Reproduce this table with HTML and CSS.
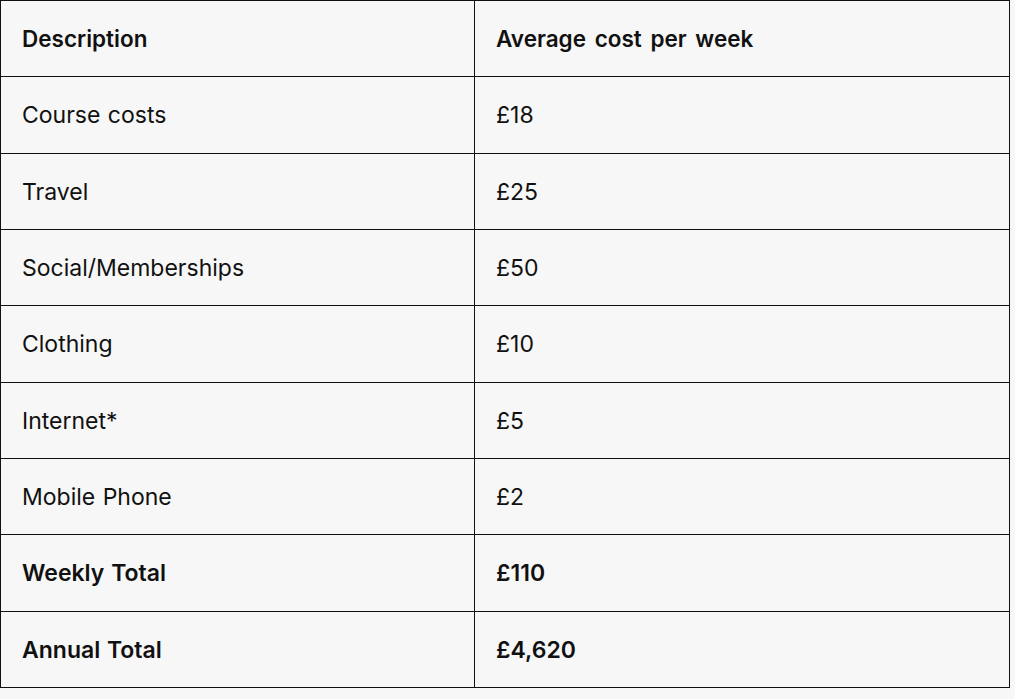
FILE: index.html
```html
<!DOCTYPE html>
<html lang="en">
<head>
<meta charset="utf-8">
<title>Costs</title>
<link rel="stylesheet" href="styles.css">
</head>
<body>
<table class="costs">
  <thead>
    <tr><th class="col-desc">Description</th><th>Average cost per week</th></tr>
  </thead>
  <tbody>
    <tr><td>Course costs</td><td>£18</td></tr>
    <tr><td>Travel</td><td>£25</td></tr>
    <tr><td>Social/Memberships</td><td>£50</td></tr>
    <tr><td>Clothing</td><td>£10</td></tr>
    <tr><td>Internet*</td><td>£5</td></tr>
    <tr><td>Mobile Phone</td><td>£2</td></tr>
    <tr class="total"><td>Weekly Total</td><td>£110</td></tr>
    <tr class="total"><td>Annual Total</td><td>£4,620</td></tr>
  </tbody>
</table>
</body>
</html>
```
FILE: styles.css
```css
html, body {
  margin: 0;
  padding: 0;
  background: #f7f7f7;
}
body {
  font-family: Inter, "Noto Sans", sans-serif;
  color: #111;
}
.costs {
  border-collapse: collapse;
  width: 1010px;
  table-layout: fixed;
}
.costs th,
.costs td {
  border: 1px solid #111;
  padding: 23px 21px 21px;
  font-size: 23px;
  line-height: 31.33px;
  word-spacing: 1px;
  text-align: left;
  vertical-align: middle;
}
.costs th {
  padding: 22px 21px;
  font-weight: 600;
  font-size: 22.5px;
  word-spacing: 3px;
}
.col-desc {
  width: 431px;
}
.total td {
  font-weight: 600;
}
```
